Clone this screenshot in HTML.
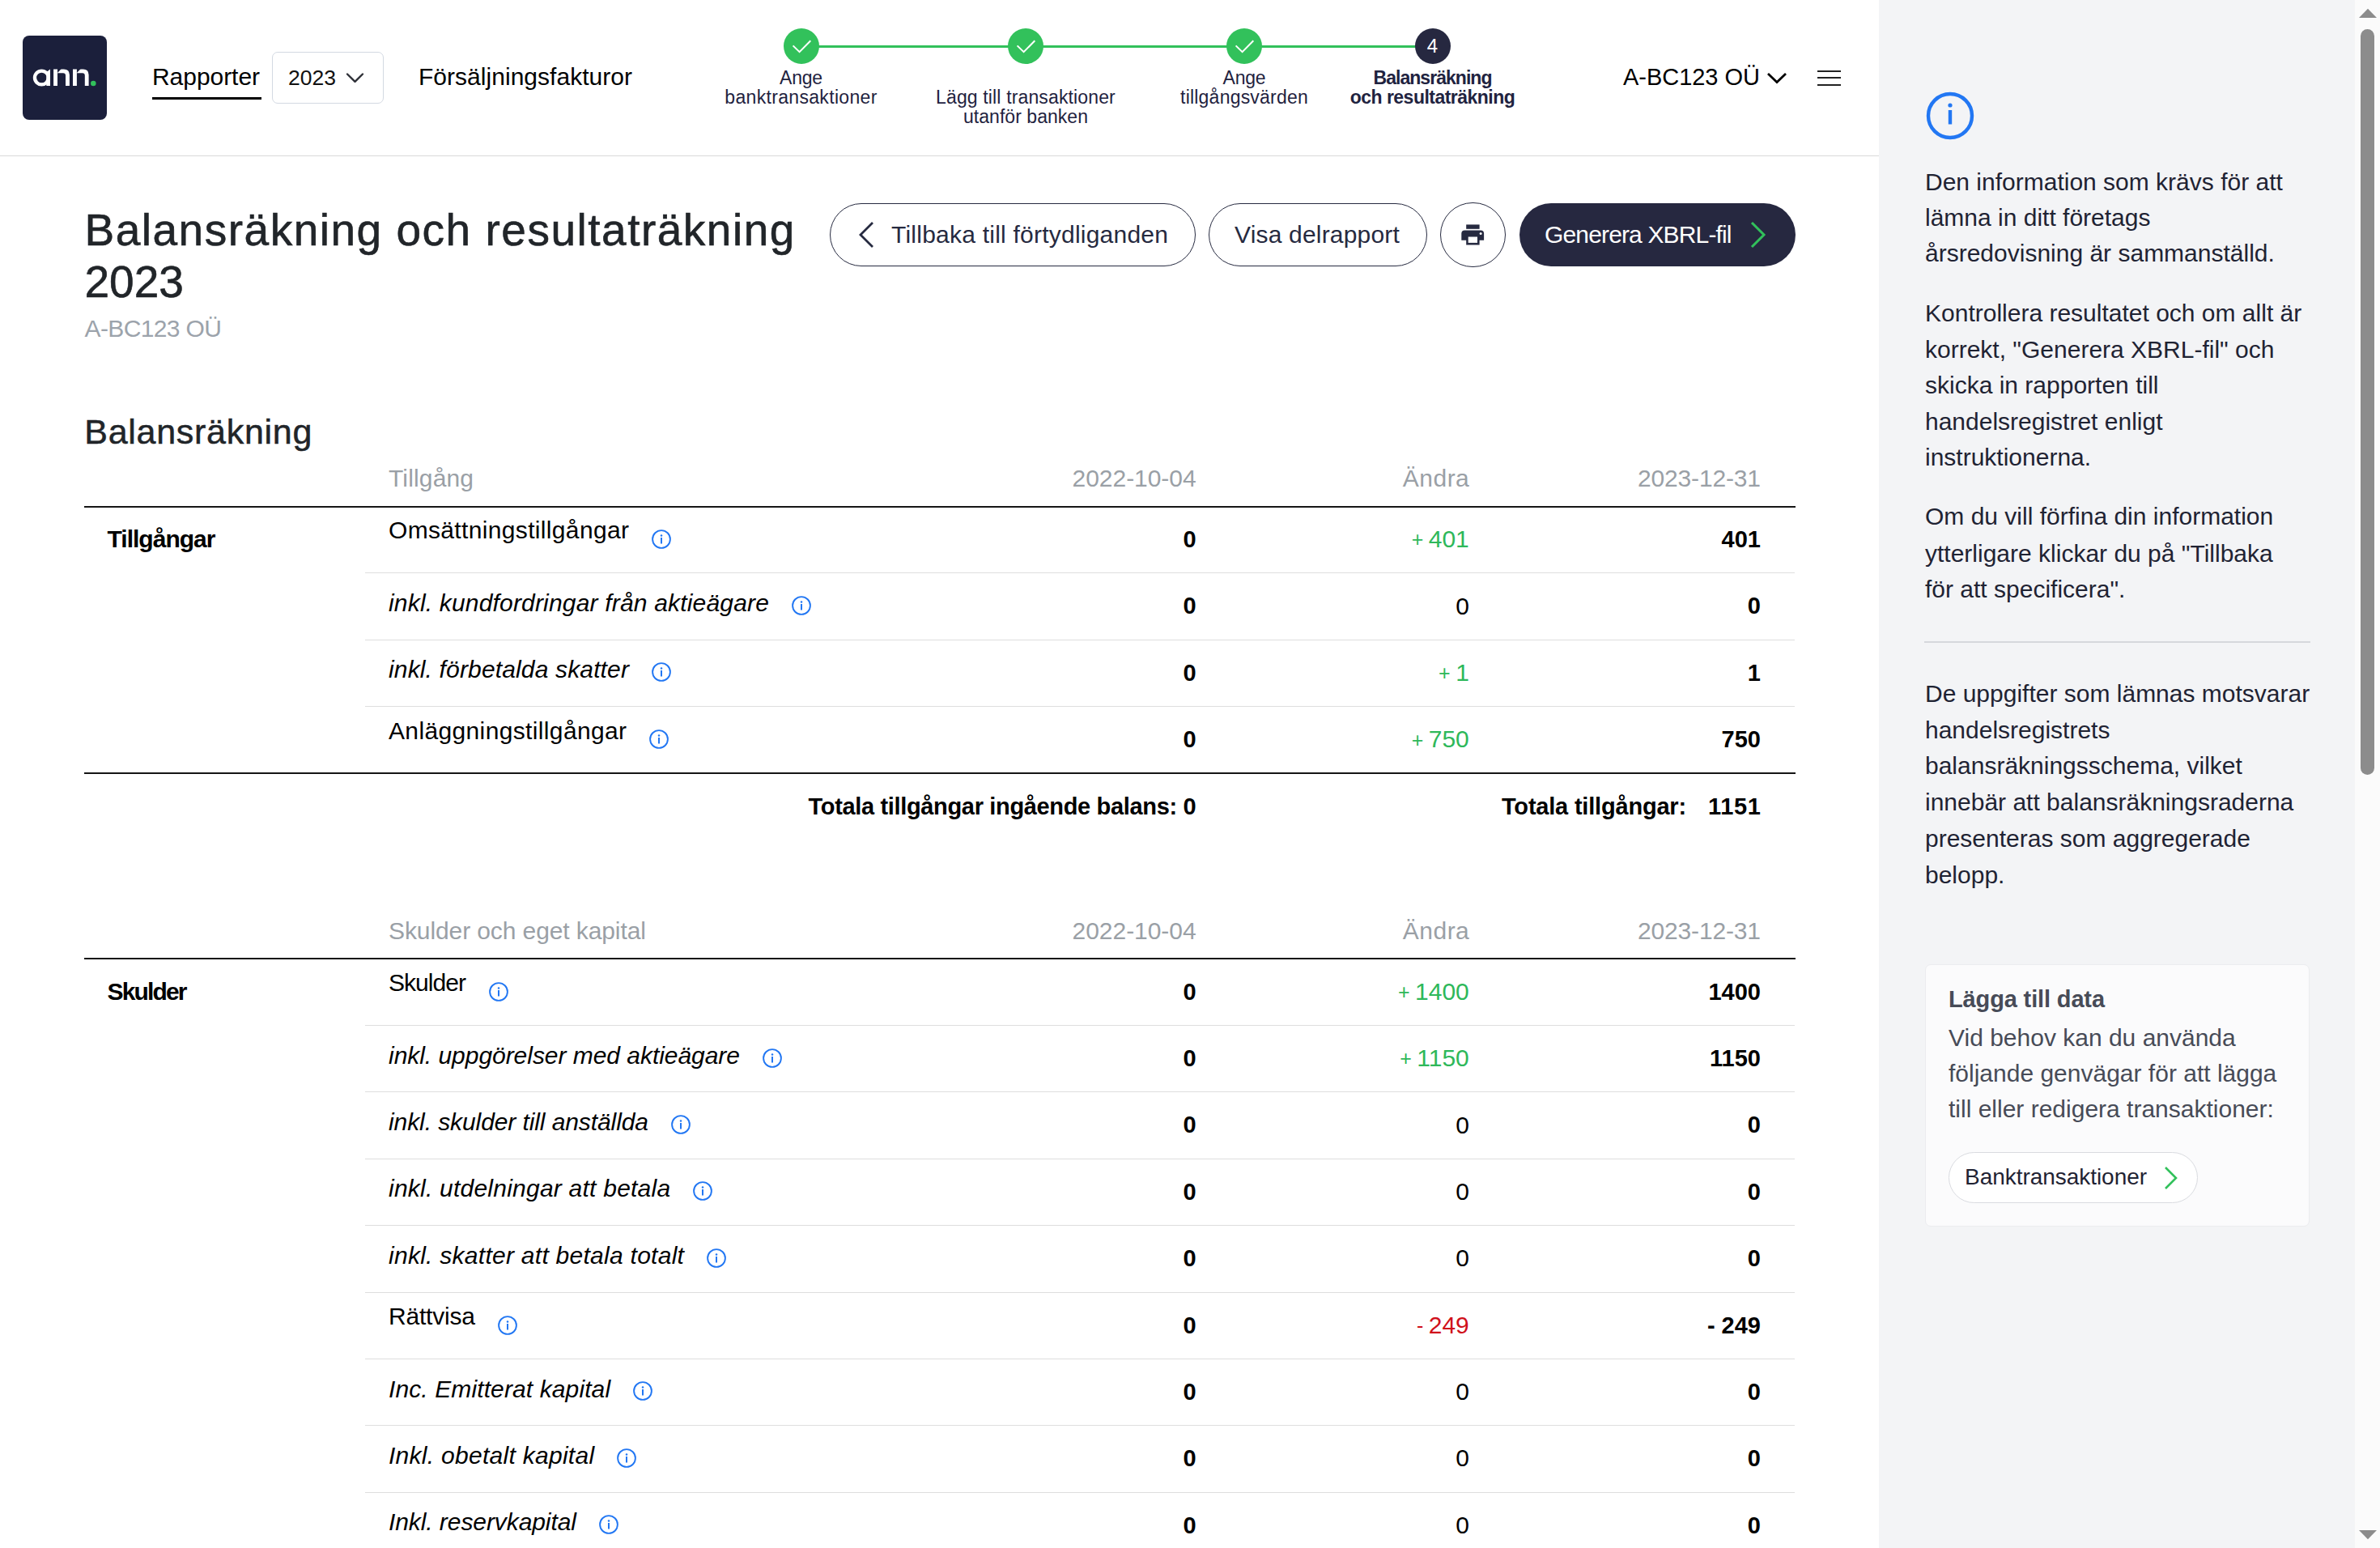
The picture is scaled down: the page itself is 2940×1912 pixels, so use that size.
<!DOCTYPE html>
<html><head><meta charset="utf-8"><title>Balansräkning och resultaträkning</title>
<style>
html,body{margin:0;padding:0;}
body{width:2940px;height:1912px;position:relative;overflow:hidden;background:#fff;font-family:"Liberation Sans",sans-serif;}
.t{position:absolute;white-space:nowrap;line-height:1;}
svg{display:block;}
</style></head><body>
<div style="position:absolute;left:2321px;top:0px;width:588px;height:1912px;background:#f3f4f6;"></div>
<div style="position:absolute;left:2909px;top:0px;width:31px;height:1912px;background:#fbfbfb;"></div>
<div style="position:absolute;left:2916px;top:36px;width:17px;height:921px;background:#8c8c8c;border-radius:8.5px;"></div>
<svg style="position:absolute;left:2914px;top:10px" width="22" height="13"><path d="M0 12 L11 0.7 L22 12 Z" fill="#8c8c8c"/></svg>
<svg style="position:absolute;left:2914px;top:1889px" width="22" height="13"><path d="M0 1 L11 12.3 L22 1 Z" fill="#8c8c8c"/></svg>
<div style="position:absolute;left:0px;top:191.8px;width:2321px;height:1.6px;background:#d9d9d9;"></div>
<div style="position:absolute;left:28px;top:44px;width:104px;height:104px;background:#1b1f3b;border-radius:8px;"></div>
<svg style="position:absolute;left:28px;top:44px" width="104" height="104" viewBox="0 0 104 104"><circle cx="23.4" cy="52" r="8.45" fill="none" stroke="#fff" stroke-width="4.3"/><path d="M29.3 45 L34 41.5 V62.1 H29.3 Z" fill="#fff"/><path d="M38.1 62.1 V41.5 H50.8 Q57.9 41.5 57.9 48.6 V62.1 H53 V49.2 Q53 46.2 50 46.2 H43 V62.1 Z" fill="#fff"/><path d="M62 62.1 V41.5 H74.7 Q81.6 41.5 81.6 48.6 V62.1 H76.8 V49.2 Q76.8 46.2 73.8 46.2 H66.9 V62.1 Z" fill="#fff"/><path d="M43 41 H47.8 L43 46 Z M66.9 41 H71.7 L66.9 46 Z" fill="#1b1f3b"/><circle cx="87.3" cy="59" r="3.3" fill="#32c15b"/></svg>
<div class="t" style="top:80.31px;font-size:30px;color:#000;letter-spacing:-0.05px;left:188.00px;">Rapporter</div>
<div style="position:absolute;left:188px;top:120px;width:135px;height:3px;background:#000;"></div>
<div style="position:absolute;left:336px;top:64px;width:138px;height:64px;border:1.5px solid #d3d9e2;border-radius:7px;box-sizing:border-box;"></div>
<div class="t" style="top:82.57px;font-size:26.5px;color:#111;letter-spacing:0.02px;left:356.00px;">2023</div>
<svg style="position:absolute;left:426px;top:88px" width="25" height="16"><path d="M3 3.5 L12.5 12.8 L22 3.5" fill="none" stroke="#2d2f36" stroke-width="2.4" stroke-linecap="round" stroke-linejoin="round"/></svg>
<div class="t" style="top:79.61px;font-size:30px;color:#000;letter-spacing:0.03px;left:517.00px;">Försäljningsfakturor</div>
<div style="position:absolute;left:989px;top:55.5px;width:780px;height:3.5px;background:#32c15b;"></div>
<svg style="position:absolute;left:967.5px;top:34.6px" width="44" height="44"><circle cx="22" cy="22" r="22" fill="#32c15b"/><path d="M11.6 21.4 L19.6 29.2 L33.3 15.3" fill="none" stroke="#fff" stroke-width="2"/></svg>
<svg style="position:absolute;left:1245.0px;top:34.6px" width="44" height="44"><circle cx="22" cy="22" r="22" fill="#32c15b"/><path d="M11.6 21.4 L19.6 29.2 L33.3 15.3" fill="none" stroke="#fff" stroke-width="2"/></svg>
<svg style="position:absolute;left:1515.0px;top:34.6px" width="44" height="44"><circle cx="22" cy="22" r="22" fill="#32c15b"/><path d="M11.6 21.4 L19.6 29.2 L33.3 15.3" fill="none" stroke="#fff" stroke-width="2"/></svg>
<svg style="position:absolute;left:1747.5px;top:34.6px" width="44" height="44"><circle cx="22" cy="22" r="22" fill="#262840"/></svg>
<div class="t" style="top:45.18px;font-size:24px;color:#fff;left:1169.50px;width:1200px;text-align:center;">4</div>
<div class="t" style="top:84.53px;font-size:23px;color:#1f2340;letter-spacing:-0.24px;left:389.50px;width:1200px;text-align:center;">Ange</div>
<div class="t" style="top:108.53px;font-size:23px;color:#1f2340;letter-spacing:0.32px;left:389.50px;width:1200px;text-align:center;">banktransaktioner</div>
<div class="t" style="top:108.53px;font-size:23px;color:#1f2340;letter-spacing:0.14px;left:667.00px;width:1200px;text-align:center;">Lägg till transaktioner</div>
<div class="t" style="top:132.53px;font-size:23px;color:#1f2340;letter-spacing:0.04px;left:667.00px;width:1200px;text-align:center;">utanför banken</div>
<div class="t" style="top:84.53px;font-size:23px;color:#1f2340;letter-spacing:-0.24px;left:937.00px;width:1200px;text-align:center;">Ange</div>
<div class="t" style="top:108.53px;font-size:23px;color:#1f2340;letter-spacing:0.21px;left:937.00px;width:1200px;text-align:center;">tillgångsvärden</div>
<div class="t" style="top:84.53px;font-size:23px;color:#1f2340;font-weight:700;letter-spacing:-0.96px;left:1169.50px;width:1200px;text-align:center;">Balansräkning</div>
<div class="t" style="top:108.53px;font-size:23px;color:#1f2340;font-weight:700;letter-spacing:-0.52px;left:1169.50px;width:1200px;text-align:center;">och resultaträkning</div>
<div class="t" style="top:80.95px;font-size:29px;color:#000;letter-spacing:-0.03px;left:2005.00px;">A-BC123 OÜ</div>
<svg style="position:absolute;left:2182px;top:88px" width="26" height="16"><path d="M2 3 L13 13.5 L24 3" fill="none" stroke="#000" stroke-width="2.8"/></svg>
<div style="position:absolute;left:2245px;top:87px;width:29px;height:2.2px;background:#222;"></div>
<div style="position:absolute;left:2245px;top:95.3px;width:29px;height:2.2px;background:#222;"></div>
<div style="position:absolute;left:2245px;top:103.5px;width:29px;height:2.2px;background:#222;"></div>
<div class="t" style="top:257.44px;font-size:55px;color:#212529;letter-spacing:1.51px;left:104.50px;-webkit-text-stroke:0.6px #212529;">Balansräkning och resultaträkning</div>
<div class="t" style="top:321.44px;font-size:55px;color:#212529;left:104.50px;-webkit-text-stroke:0.6px #212529;">2023</div>
<div class="t" style="top:390.61px;font-size:30px;color:#9ca3ab;letter-spacing:-0.62px;left:104.50px;">A-BC123 OÜ</div>
<div style="position:absolute;left:1025px;top:250.5px;width:452px;height:78.5px;border:1.6px solid #262a40;border-radius:40px;box-sizing:border-box;"></div>
<svg style="position:absolute;left:1058px;top:272px" width="24" height="36"><path d="M20 3 L5 18 L20 33" fill="none" stroke="#262a40" stroke-width="2.8"/></svg>
<div class="t" style="top:274.91px;font-size:30px;color:#262a40;letter-spacing:0.23px;left:1101.00px;">Tillbaka till förtydliganden</div>
<div style="position:absolute;left:1493px;top:250.5px;width:270px;height:78.5px;border:1.6px solid #262a40;border-radius:40px;box-sizing:border-box;"></div>
<div class="t" style="top:274.91px;font-size:30px;color:#262a40;letter-spacing:0.18px;left:1525.00px;">Visa delrapport</div>
<div style="position:absolute;left:1779px;top:249.6px;width:80.8px;height:80.8px;border:1.6px solid #262a40;border-radius:50%;box-sizing:border-box;"></div>
<svg style="position:absolute;left:1805px;top:277px" width="29" height="26" viewBox="0 0 29 26"><rect x="6.2" y="0.4" width="16.4" height="5.4" fill="#262a40"/><path d="M4.3 7.4 H24.1 Q28.1 7.4 28.1 11.4 V19.7 H0.3 V11.4 Q0.3 7.4 4.3 7.4 Z" fill="#262a40"/><rect x="6.2" y="14" width="16.4" height="11.5" fill="#262a40"/><rect x="8.7" y="15.5" width="11.3" height="7.4" fill="#fff"/><circle cx="24.1" cy="11.5" r="1.5" fill="#fff"/></svg>
<div style="position:absolute;left:1877px;top:250.5px;width:341px;height:78.5px;background:#262840;border-radius:40px;"></div>
<div class="t" style="top:274.91px;font-size:30px;color:#fff;letter-spacing:-0.85px;left:1908.00px;">Generera XBRL-fil</div>
<svg style="position:absolute;left:2159px;top:272px" width="26" height="36"><path d="M5 3 L20 18 L5 33" fill="none" stroke="#32c15b" stroke-width="3"/></svg>
<div class="t" style="top:511.90px;font-size:43px;color:#212529;letter-spacing:0.71px;left:104.30px;-webkit-text-stroke:0.5px #212529;">Balansräkning</div>
<div class="t" style="top:575.90px;font-size:30px;color:#9aa0a6;letter-spacing:0.15px;left:480.00px;">Tillgång</div>
<div class="t" style="top:575.90px;font-size:30px;color:#9aa0a6;letter-spacing:-0.05px;right:1462.45px;">2022-10-04</div>
<div class="t" style="top:575.90px;font-size:30px;color:#9aa0a6;letter-spacing:0.49px;right:1124.71px;">Ändra</div>
<div class="t" style="top:575.90px;font-size:30px;color:#9aa0a6;letter-spacing:-0.16px;right:765.16px;">2023-12-31</div>
<div style="position:absolute;left:104px;top:625px;width:2113.5px;height:2px;background:#151515;"></div>
<div class="t" style="top:651.11px;font-size:30px;color:#000;font-weight:700;letter-spacing:-0.98px;left:132.50px;">Tillgångar</div>
<div class="t" style="top:640.31px;font-size:30px;color:#000;letter-spacing:0.34px;left:480.00px;">Omsättningstillgångar</div>
<svg style="position:absolute;left:805.0px;top:654.0px" width="24" height="24" viewBox="0 0 24 24"><circle cx="12" cy="12" r="10.9" fill="none" stroke="#2277f3" stroke-width="1.9"/><circle cx="12" cy="7.6" r="1.25" fill="#2277f3"/><rect x="11" y="10" width="2" height="7.5" fill="#2277f3"/></svg>
<div class="t" style="top:651.95px;font-size:29px;color:#000;font-weight:700;right:1462.40px;">0</div>
<div class="t" style="top:651.11px;font-size:30px;color:#2eb85a;right:1125.20px;">401</div>
<div class="t" style="top:654.34px;font-size:25px;color:#2eb85a;right:1181.75px;">+</div>
<div class="t" style="top:651.95px;font-size:29px;color:#000;font-weight:700;right:765.00px;">401</div>
<div style="position:absolute;left:451px;top:707px;width:1766px;height:1px;background:#dedede;"></div>
<div class="t" style="top:730.00px;font-size:30px;color:#000;font-style:italic;letter-spacing:0.18px;left:480.00px;">inkl. kundfordringar från aktieägare</div>
<svg style="position:absolute;left:978.0px;top:735.9px" width="24" height="24" viewBox="0 0 24 24"><circle cx="12" cy="12" r="10.9" fill="none" stroke="#2277f3" stroke-width="1.9"/><circle cx="12" cy="7.6" r="1.25" fill="#2277f3"/><rect x="11" y="10" width="2" height="7.5" fill="#2277f3"/></svg>
<div class="t" style="top:734.35px;font-size:29px;color:#000;font-weight:700;right:1462.40px;">0</div>
<div class="t" style="top:733.50px;font-size:30px;color:#000;right:1125.20px;">0</div>
<div class="t" style="top:734.35px;font-size:29px;color:#000;font-weight:700;right:765.00px;">0</div>
<div style="position:absolute;left:451px;top:790px;width:1766px;height:1px;background:#dedede;"></div>
<div class="t" style="top:812.40px;font-size:30px;color:#000;font-style:italic;letter-spacing:0.15px;left:480.00px;">inkl. förbetalda skatter</div>
<svg style="position:absolute;left:805.0px;top:818.3px" width="24" height="24" viewBox="0 0 24 24"><circle cx="12" cy="12" r="10.9" fill="none" stroke="#2277f3" stroke-width="1.9"/><circle cx="12" cy="7.6" r="1.25" fill="#2277f3"/><rect x="11" y="10" width="2" height="7.5" fill="#2277f3"/></svg>
<div class="t" style="top:816.75px;font-size:29px;color:#000;font-weight:700;right:1462.40px;">0</div>
<div class="t" style="top:815.90px;font-size:30px;color:#2eb85a;right:1125.20px;">1</div>
<div class="t" style="top:819.14px;font-size:25px;color:#2eb85a;right:1148.38px;">+</div>
<div class="t" style="top:816.75px;font-size:29px;color:#000;font-weight:700;right:765.00px;">1</div>
<div style="position:absolute;left:451px;top:872px;width:1766px;height:1px;background:#dedede;"></div>
<div class="t" style="top:887.51px;font-size:30px;color:#000;letter-spacing:0.36px;left:480.00px;">Anläggningstillgångar</div>
<svg style="position:absolute;left:802.0px;top:901.2px" width="24" height="24" viewBox="0 0 24 24"><circle cx="12" cy="12" r="10.9" fill="none" stroke="#2277f3" stroke-width="1.9"/><circle cx="12" cy="7.6" r="1.25" fill="#2277f3"/><rect x="11" y="10" width="2" height="7.5" fill="#2277f3"/></svg>
<div class="t" style="top:899.15px;font-size:29px;color:#000;font-weight:700;right:1462.40px;">0</div>
<div class="t" style="top:898.31px;font-size:30px;color:#2eb85a;right:1125.20px;">750</div>
<div class="t" style="top:901.54px;font-size:25px;color:#2eb85a;right:1181.75px;">+</div>
<div class="t" style="top:899.15px;font-size:29px;color:#000;font-weight:700;right:765.00px;">750</div>
<div style="position:absolute;left:104px;top:954.2px;width:2113.5px;height:2px;background:#151515;"></div>
<div class="t" style="top:982.45px;font-size:29px;color:#000;font-weight:700;letter-spacing:-0.34px;right:1462.74px;">Totala tillgångar ingående balans: 0</div>
<div class="t" style="top:982.45px;font-size:29px;color:#000;font-weight:700;letter-spacing:-0.20px;left:1855.00px;">Totala tillgångar:</div>
<div class="t" style="top:982.45px;font-size:29px;color:#000;font-weight:700;letter-spacing:0.70px;right:764.30px;">1151</div>
<div class="t" style="top:1134.90px;font-size:30px;color:#9aa0a6;letter-spacing:-0.10px;left:480.00px;">Skulder och eget kapital</div>
<div class="t" style="top:1134.90px;font-size:30px;color:#9aa0a6;letter-spacing:-0.05px;right:1462.45px;">2022-10-04</div>
<div class="t" style="top:1134.90px;font-size:30px;color:#9aa0a6;letter-spacing:0.49px;right:1124.71px;">Ändra</div>
<div class="t" style="top:1134.90px;font-size:30px;color:#9aa0a6;letter-spacing:-0.16px;right:765.16px;">2023-12-31</div>
<div style="position:absolute;left:104px;top:1182.5px;width:2113.5px;height:2px;background:#151515;"></div>
<div class="t" style="top:1209.90px;font-size:30px;color:#000;font-weight:700;letter-spacing:-1.84px;left:132.50px;">Skulder</div>
<div class="t" style="top:1199.11px;font-size:30px;color:#000;letter-spacing:-0.95px;left:480.00px;">Skulder</div>
<svg style="position:absolute;left:604.0px;top:1212.8px" width="24" height="24" viewBox="0 0 24 24"><circle cx="12" cy="12" r="10.9" fill="none" stroke="#2277f3" stroke-width="1.9"/><circle cx="12" cy="7.6" r="1.25" fill="#2277f3"/><rect x="11" y="10" width="2" height="7.5" fill="#2277f3"/></svg>
<div class="t" style="top:1210.75px;font-size:29px;color:#000;font-weight:700;right:1462.40px;">0</div>
<div class="t" style="top:1209.90px;font-size:30px;color:#2eb85a;right:1125.20px;">1400</div>
<div class="t" style="top:1213.14px;font-size:25px;color:#2eb85a;right:1198.44px;">+</div>
<div class="t" style="top:1210.75px;font-size:29px;color:#000;font-weight:700;right:765.00px;">1400</div>
<div style="position:absolute;left:451px;top:1266px;width:1766px;height:1px;background:#dedede;"></div>
<div class="t" style="top:1288.75px;font-size:30px;color:#000;font-style:italic;letter-spacing:-0.04px;left:480.00px;">inkl. uppgörelser med aktieägare</div>
<svg style="position:absolute;left:942.0px;top:1294.6px" width="24" height="24" viewBox="0 0 24 24"><circle cx="12" cy="12" r="10.9" fill="none" stroke="#2277f3" stroke-width="1.9"/><circle cx="12" cy="7.6" r="1.25" fill="#2277f3"/><rect x="11" y="10" width="2" height="7.5" fill="#2277f3"/></svg>
<div class="t" style="top:1293.10px;font-size:29px;color:#000;font-weight:700;right:1462.40px;">0</div>
<div class="t" style="top:1292.25px;font-size:30px;color:#2eb85a;right:1125.20px;">1150</div>
<div class="t" style="top:1295.49px;font-size:25px;color:#2eb85a;right:1196.21px;">+</div>
<div class="t" style="top:1293.10px;font-size:29px;color:#000;font-weight:700;right:765.00px;">1150</div>
<div style="position:absolute;left:451px;top:1348px;width:1766px;height:1px;background:#dedede;"></div>
<div class="t" style="top:1371.11px;font-size:30px;color:#000;font-style:italic;letter-spacing:-0.09px;left:480.00px;">inkl. skulder till anställda</div>
<svg style="position:absolute;left:829.0px;top:1377.0px" width="24" height="24" viewBox="0 0 24 24"><circle cx="12" cy="12" r="10.9" fill="none" stroke="#2277f3" stroke-width="1.9"/><circle cx="12" cy="7.6" r="1.25" fill="#2277f3"/><rect x="11" y="10" width="2" height="7.5" fill="#2277f3"/></svg>
<div class="t" style="top:1375.45px;font-size:29px;color:#000;font-weight:700;right:1462.40px;">0</div>
<div class="t" style="top:1374.61px;font-size:30px;color:#000;right:1125.20px;">0</div>
<div class="t" style="top:1375.45px;font-size:29px;color:#000;font-weight:700;right:765.00px;">0</div>
<div style="position:absolute;left:451px;top:1431px;width:1766px;height:1px;background:#dedede;"></div>
<div class="t" style="top:1453.45px;font-size:30px;color:#000;font-style:italic;letter-spacing:0.23px;left:480.00px;">inkl. utdelningar att betala</div>
<svg style="position:absolute;left:856.0px;top:1459.3px" width="24" height="24" viewBox="0 0 24 24"><circle cx="12" cy="12" r="10.9" fill="none" stroke="#2277f3" stroke-width="1.9"/><circle cx="12" cy="7.6" r="1.25" fill="#2277f3"/><rect x="11" y="10" width="2" height="7.5" fill="#2277f3"/></svg>
<div class="t" style="top:1457.80px;font-size:29px;color:#000;font-weight:700;right:1462.40px;">0</div>
<div class="t" style="top:1456.95px;font-size:30px;color:#000;right:1125.20px;">0</div>
<div class="t" style="top:1457.80px;font-size:29px;color:#000;font-weight:700;right:765.00px;">0</div>
<div style="position:absolute;left:451px;top:1513px;width:1766px;height:1px;background:#dedede;"></div>
<div class="t" style="top:1535.80px;font-size:30px;color:#000;font-style:italic;letter-spacing:0.27px;left:480.00px;">inkl. skatter att betala totalt</div>
<svg style="position:absolute;left:873.0px;top:1541.7px" width="24" height="24" viewBox="0 0 24 24"><circle cx="12" cy="12" r="10.9" fill="none" stroke="#2277f3" stroke-width="1.9"/><circle cx="12" cy="7.6" r="1.25" fill="#2277f3"/><rect x="11" y="10" width="2" height="7.5" fill="#2277f3"/></svg>
<div class="t" style="top:1540.15px;font-size:29px;color:#000;font-weight:700;right:1462.40px;">0</div>
<div class="t" style="top:1539.30px;font-size:30px;color:#000;right:1125.20px;">0</div>
<div class="t" style="top:1540.15px;font-size:29px;color:#000;font-weight:700;right:765.00px;">0</div>
<div style="position:absolute;left:451px;top:1596px;width:1766px;height:1px;background:#dedede;"></div>
<div class="t" style="top:1610.86px;font-size:30px;color:#000;letter-spacing:-0.20px;left:480.00px;">Rättvisa</div>
<svg style="position:absolute;left:615.0px;top:1624.5px" width="24" height="24" viewBox="0 0 24 24"><circle cx="12" cy="12" r="10.9" fill="none" stroke="#2277f3" stroke-width="1.9"/><circle cx="12" cy="7.6" r="1.25" fill="#2277f3"/><rect x="11" y="10" width="2" height="7.5" fill="#2277f3"/></svg>
<div class="t" style="top:1622.50px;font-size:29px;color:#000;font-weight:700;right:1462.40px;">0</div>
<div class="t" style="top:1621.65px;font-size:30px;color:#d0101b;right:1125.20px;">249</div>
<div class="t" style="top:1624.89px;font-size:25px;color:#d0101b;right:1181.75px;">-</div>
<div class="t" style="top:1622.50px;font-size:29px;color:#000;font-weight:700;right:765.00px;">- 249</div>
<div style="position:absolute;left:451px;top:1678px;width:1766px;height:1px;background:#dedede;"></div>
<div class="t" style="top:1700.50px;font-size:30px;color:#000;font-style:italic;letter-spacing:0.11px;left:480.00px;">Inc. Emitterat kapital</div>
<svg style="position:absolute;left:782.0px;top:1706.4px" width="24" height="24" viewBox="0 0 24 24"><circle cx="12" cy="12" r="10.9" fill="none" stroke="#2277f3" stroke-width="1.9"/><circle cx="12" cy="7.6" r="1.25" fill="#2277f3"/><rect x="11" y="10" width="2" height="7.5" fill="#2277f3"/></svg>
<div class="t" style="top:1704.85px;font-size:29px;color:#000;font-weight:700;right:1462.40px;">0</div>
<div class="t" style="top:1704.00px;font-size:30px;color:#000;right:1125.20px;">0</div>
<div class="t" style="top:1704.85px;font-size:29px;color:#000;font-weight:700;right:765.00px;">0</div>
<div style="position:absolute;left:451px;top:1760px;width:1766px;height:1px;background:#dedede;"></div>
<div class="t" style="top:1782.86px;font-size:30px;color:#000;font-style:italic;letter-spacing:0.28px;left:480.00px;">Inkl. obetalt kapital</div>
<svg style="position:absolute;left:762.0px;top:1788.8px" width="24" height="24" viewBox="0 0 24 24"><circle cx="12" cy="12" r="10.9" fill="none" stroke="#2277f3" stroke-width="1.9"/><circle cx="12" cy="7.6" r="1.25" fill="#2277f3"/><rect x="11" y="10" width="2" height="7.5" fill="#2277f3"/></svg>
<div class="t" style="top:1787.20px;font-size:29px;color:#000;font-weight:700;right:1462.40px;">0</div>
<div class="t" style="top:1786.36px;font-size:30px;color:#000;right:1125.20px;">0</div>
<div class="t" style="top:1787.20px;font-size:29px;color:#000;font-weight:700;right:765.00px;">0</div>
<div style="position:absolute;left:451px;top:1843px;width:1766px;height:1px;background:#dedede;"></div>
<div class="t" style="top:1865.20px;font-size:30px;color:#000;font-style:italic;letter-spacing:-0.08px;left:480.00px;">Inkl. reservkapital</div>
<svg style="position:absolute;left:740.0px;top:1871.1px" width="24" height="24" viewBox="0 0 24 24"><circle cx="12" cy="12" r="10.9" fill="none" stroke="#2277f3" stroke-width="1.9"/><circle cx="12" cy="7.6" r="1.25" fill="#2277f3"/><rect x="11" y="10" width="2" height="7.5" fill="#2277f3"/></svg>
<div class="t" style="top:1869.55px;font-size:29px;color:#000;font-weight:700;right:1462.40px;">0</div>
<div class="t" style="top:1868.70px;font-size:30px;color:#000;right:1125.20px;">0</div>
<div class="t" style="top:1869.55px;font-size:29px;color:#000;font-weight:700;right:765.00px;">0</div>
<svg style="position:absolute;left:2379px;top:113px" width="60" height="60" viewBox="0 0 60 60"><circle cx="30" cy="30" r="27" fill="none" stroke="#2277f3" stroke-width="4.4"/><circle cx="30" cy="17" r="2.6" fill="#2277f3"/><rect x="27.8" y="23" width="4.4" height="17.5" fill="#2277f3"/></svg>
<div class="t" style="top:210.00px;font-size:30px;color:#1f2333;left:2378.00px;">Den information som krävs för att</div>
<div class="t" style="top:254.30px;font-size:30px;color:#1f2333;left:2378.00px;">lämna in ditt företags</div>
<div class="t" style="top:298.11px;font-size:30px;color:#1f2333;left:2378.00px;">årsredovisning är sammanställd.</div>
<div class="t" style="top:371.61px;font-size:30px;color:#1f2333;left:2378.00px;">Kontrollera resultatet och om allt är</div>
<div class="t" style="top:416.81px;font-size:30px;color:#1f2333;left:2378.00px;">korrekt, &quot;Generera XBRL-fil&quot; och</div>
<div class="t" style="top:461.21px;font-size:30px;color:#1f2333;left:2378.00px;">skicka in rapporten till</div>
<div class="t" style="top:506.40px;font-size:30px;color:#1f2333;left:2378.00px;">handelsregistret enligt</div>
<div class="t" style="top:550.40px;font-size:30px;color:#1f2333;left:2378.00px;">instruktionerna.</div>
<div class="t" style="top:622.61px;font-size:30px;color:#1f2333;left:2378.00px;">Om du vill förfina din information</div>
<div class="t" style="top:668.81px;font-size:30px;color:#1f2333;left:2378.00px;">ytterligare klickar du på &quot;Tillbaka</div>
<div class="t" style="top:713.21px;font-size:30px;color:#1f2333;left:2378.00px;">för att specificera&quot;.</div>
<div class="t" style="top:841.90px;font-size:30px;color:#1f2333;left:2378.00px;">De uppgifter som lämnas motsvarar</div>
<div class="t" style="top:886.50px;font-size:30px;color:#1f2333;left:2378.00px;">handelsregistrets</div>
<div class="t" style="top:931.40px;font-size:30px;color:#1f2333;left:2378.00px;">balansräkningsschema, vilket</div>
<div class="t" style="top:976.31px;font-size:30px;color:#1f2333;left:2378.00px;">innebär att balansräkningsraderna</div>
<div class="t" style="top:1021.20px;font-size:30px;color:#1f2333;left:2378.00px;">presenteras som aggregerade</div>
<div class="t" style="top:1066.11px;font-size:30px;color:#1f2333;left:2378.00px;">belopp.</div>
<div style="position:absolute;left:2377px;top:792px;width:477px;height:2px;background:#d6d8dc;"></div>
<div style="position:absolute;left:2378px;top:1190.5px;width:475px;height:324px;background:#fbfbfc;border:1px solid #ebecef;border-radius:7px;box-sizing:border-box;"></div>
<div class="t" style="top:1220.45px;font-size:29px;color:#474b57;font-weight:700;letter-spacing:-0.14px;left:2407.00px;">Lägga till data</div>
<div class="t" style="top:1267.31px;font-size:30px;color:#474b57;left:2407.00px;">Vid behov kan du använda</div>
<div class="t" style="top:1311.11px;font-size:30px;color:#474b57;left:2407.00px;">följande genvägar för att lägga</div>
<div class="t" style="top:1354.90px;font-size:30px;color:#474b57;left:2407.00px;">till eller redigera transaktioner:</div>
<div style="position:absolute;left:2407px;top:1423px;width:308px;height:63px;background:#fff;border:1.5px solid #d9dbe0;border-radius:32px;box-sizing:border-box;"></div>
<div class="t" style="top:1439.80px;font-size:28px;color:#1f2333;letter-spacing:-0.04px;left:2427.00px;">Banktransaktioner</div>
<svg style="position:absolute;left:2671px;top:1440px" width="22" height="30"><path d="M4 2 L17 15 L4 28" fill="none" stroke="#32c15b" stroke-width="2.6"/></svg>
<script>(function(){var w=window.innerWidth;if(w&&Math.abs(w-2940)>4){document.documentElement.style.zoom=(w/2940);}})();</script>
</body></html>
